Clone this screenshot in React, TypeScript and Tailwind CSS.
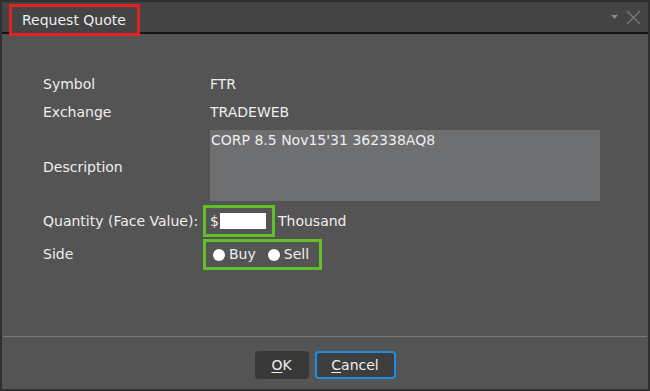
import { useState } from "react";

export default function App() {
  const [side, setSide] = useState<"buy" | "sell" | "">("");
  const [qty, setQty] = useState("");

  return (
    <div
      className="h-[391px] w-[650px] bg-[#2f2f2f] p-[2px] text-[14px] text-[#eeeeee]"
      style={{ fontFamily: '"DejaVu Sans", Verdana, sans-serif' }}
    >
      <div className="flex h-full flex-col bg-[#545454]">
        {/* title bar */}
        <div className="flex h-[32px] shrink-0 items-start justify-between border-b-2 border-[#141414] bg-[#444444]">
          <div className="relative z-10 ml-[7px] mt-[2px] flex h-[32px] items-center border-[3px] border-[#e3211f] bg-[#444444] pl-[10px] pr-[11px]">
            Request Quote
          </div>
          <div className="mr-[7px] mt-[8px] flex items-center gap-[8px]">
            <svg width="7" height="5" viewBox="0 0 7 5">
              <path d="M0 0 L7 0 L3.5 4 Z" fill="#8a8a8a" />
            </svg>
            <svg width="15" height="15" viewBox="0 0 15 15">
              <path d="M1 1 L14 14 M14 1 L1 14" stroke="#7a7a7a" strokeWidth="1.4" />
            </svg>
          </div>
        </div>

        {/* form */}
        <div className="grid flex-1 grid-cols-[160px_1fr] content-start pl-[41px] pt-[36px]">
          <div className="flex h-[28px] items-center">Symbol</div>
          <div className="flex h-[28px] items-center pl-[7px]">FTR</div>

          <div className="flex h-[28px] items-center">Exchange</div>
          <div className="flex h-[28px] items-center pl-[7px]">TRADEWEB</div>

          <div className="mt-[4px] flex h-[71px] items-center pt-[3px]">Description</div>
          <div className="mt-[4px] pl-[7px]">
            <div className="h-[71px] w-[390px] bg-[#6e6f71] px-[1px] pt-[1px] leading-[18px]">
              CORP 8.5 Nov15'31 362338AQ8
            </div>
          </div>

          <div className="mt-[4px] flex h-[32px] items-center">Quantity (Face Value):</div>
          <div className="mt-[4px] flex h-[32px] items-center">
            <div className="flex h-[32px] w-[72px] items-center border-[3px] border-[#5fc02a] pl-[4px]">
              <span>$</span>
              <input
                value={qty}
                onChange={(e) => setQty(e.target.value)}
                className="ml-[1px] h-[16px] w-[46px] bg-white text-[12px] text-black outline-none"
              />
            </div>
            <span className="ml-[3px]">Thousand</span>
          </div>

          <div className="mt-[2px] flex h-[31px] items-center">Side</div>
          <div className="mt-[2px] flex h-[31px] items-center">
            <div className="flex h-[31px] w-[119px] items-center border-[3px] border-[#5fc02a] pl-[7px]">
              <label className="flex items-center gap-[4px]">
                <span
                  onClick={() => setSide("buy")}
                  className="flex h-[12px] w-[12px] items-center justify-center rounded-full bg-white"
                >
                  {side === "buy" && <span className="h-[6px] w-[6px] rounded-full bg-[#333]" />}
                </span>
                Buy
              </label>
              <label className="ml-[12px] flex items-center gap-[4px]">
                <span
                  onClick={() => setSide("sell")}
                  className="flex h-[12px] w-[12px] items-center justify-center rounded-full bg-white"
                >
                  {side === "sell" && <span className="h-[6px] w-[6px] rounded-full bg-[#333]" />}
                </span>
                Sell
              </label>
            </div>
          </div>
        </div>

        {/* footer */}
        <div className="mx-[1px] h-[1px] bg-[#7a7a7a]" />
        <div className="flex h-[52px] items-start justify-center gap-[6px] pt-[14px]">
          <button
            type="button"
            className="h-[28px] w-[54px] rounded-[4px] bg-[#383838] text-[14px] text-[#eeeeee]"
          >
            <span className="underline underline-offset-2">O</span>K
          </button>
          <button
            type="button"
            className="h-[28px] w-[81px] rounded-[4px] border-2 border-[#1c8fe3] bg-[#3e3e3e] text-[14px] text-[#eeeeee]"
          >
            <span className="underline underline-offset-2">C</span>ancel
          </button>
        </div>
      </div>
    </div>
  );
}
